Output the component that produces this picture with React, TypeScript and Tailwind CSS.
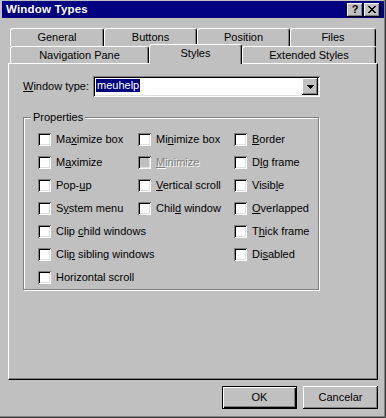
import React from "react";

function Mn({ text }: { text: string }) {
  const i = text.indexOf("&");
  if (i < 0) return <>{text}</>;
  return (
    <>
      {text.slice(0, i)}
      <span className="underline underline-offset-[1px] decoration-1">{text[i + 1]}</span>
      {text.slice(i + 2)}
    </>
  );
}

function Check({ label, disabled }: { label: string; disabled?: boolean }) {
  return (
    <div className="flex h-[13px] items-center">
      <div
        className={`w-[13px] h-[13px] shrink-0 ${
          disabled ? "bg-[#c0c0c0]" : "bg-white"
        } shadow-[inset_1px_1px_0_#808080,inset_-1px_-1px_0_#fff,inset_2px_2px_0_#000,inset_-2px_-2px_0_#dfdfdf]`}
      />
      <span
        className={`ml-[5px] whitespace-nowrap ${
          disabled ? "text-[#808080] [text-shadow:1px_1px_0_#fff]" : ""
        }`}
      >
        <Mn text={label} />
      </span>
    </div>
  );
}

function Tab({ label, w, selected }: { label: string; w: string; selected?: boolean }) {
  return (
    <div
      className={`${w} ${
        selected ? "relative z-10 -mt-[2px] h-[20px] bg-[#c0c0c0] pb-[3px]" : "h-full"
      } flex items-center justify-center border-l border-t border-r border-l-white border-t-white border-r-black rounded-t-[3px] shadow-[inset_-1px_0_0_#808080]`}
    >
      {label}
    </div>
  );
}

const col1 = [
  "Ma&ximize box",
  "M&aximize",
  "Pop-&up",
  "S&ystem menu",
  "Clip &child windows",
  "Cli&p sibling windows",
  "Horizontal scroll",
];
const col3 = ["&Border", "D&lg frame", "Visib&le", "&Overlapped", "T&hick frame", "Di&sabled"];

export default function App() {
  return (
    <div className="w-[386px] h-[418px] bg-[#c0c0c0] border-r border-b border-r-[#404040] border-b-[#404040] font-['Liberation_Sans',Arial,sans-serif] text-[11px] text-black leading-none select-none">
      <div className="h-full border-r border-b border-r-[#808080] border-b-[#808080] pl-[2px] pt-[1px]">
        {/* Title bar */}
        <div className="h-[17px] bg-[#000080] flex items-center pl-[4px] pr-[4px]">
          <span className="text-white font-bold text-[11.5px] tracking-[0.2px]">Window Types</span>
          <div className="ml-auto flex">
            <div className="w-[16px] h-[14px] bg-[#c0c0c0] flex items-center justify-center font-bold text-[11px] shadow-[inset_-1px_-1px_0_#000,inset_1px_1px_0_#fff,inset_-2px_-2px_0_#808080]">
              ?
            </div>
            <div className="ml-[1px] w-[16px] h-[14px] bg-[#c0c0c0] flex items-center justify-center shadow-[inset_-1px_-1px_0_#000,inset_1px_1px_0_#fff,inset_-2px_-2px_0_#808080]">
              <svg width="8" height="7" viewBox="0 0 8 7" shapeRendering="crispEdges">
                <path
                  d="M0 0h2v1h-2zM6 0h2v1h-2zM1 1h2v1h-2zM5 1h2v1h-2zM2 2h4v1h-4zM3 3h2v1h-2zM2 4h4v1h-4zM1 5h2v1h-2zM5 5h2v1h-2zM0 6h2v1h-2zM6 6h2v1h-2z"
                  fill="#000"
                />
              </svg>
            </div>
          </div>
        </div>

        {/* Tabs + panel */}
        <div className="ml-[6px] mt-[10px] w-[370px]">
          <div className="flex h-[18px] pl-[2px]">
            <Tab label="General" w="w-[94px]" />
            <Tab label="Buttons" w="w-[93px]" />
            <Tab label="Position" w="w-[93px]" />
            <Tab label="Files" w="w-[86px]" />
          </div>
          <div className="flex h-[17px] pl-[2px]">
            <Tab label="Navigation Pane" w="w-[139px]" />
            <Tab label="Styles" w="w-[93px]" selected />
            <Tab label="Extended Styles" w="w-[134px]" />
          </div>
          <div className="h-[317px] border border-t-white border-l-white border-r-black border-b-black shadow-[inset_-1px_-1px_0_#808080] pl-[14px] pt-[12px]">
            <div className="flex items-center">
              <span className="w-[70px]">
                <Mn text="&Window type:" />
              </span>
              <div className="w-[227px] h-[21px] bg-white shadow-[inset_1px_1px_0_#808080,inset_-1px_-1px_0_#fff,inset_2px_2px_0_#000,inset_-2px_-2px_0_#dfdfdf] p-[2px] flex">
                <div className="flex-1 pl-[1px] pt-[1px]">
                  <span className="inline-flex h-[13px] items-center bg-[#000080] text-white px-[1px]">meuhelp</span>
                </div>
                <div className="w-[16px] h-[17px] bg-[#c0c0c0] flex items-center justify-center shadow-[inset_-1px_-1px_0_#000,inset_1px_1px_0_#fff,inset_-2px_-2px_0_#808080]">
                  <svg width="7" height="4" viewBox="0 0 7 4" shapeRendering="crispEdges">
                    <path d="M0 0h7v1h-7zM1 1h5v1h-5zM2 2h3v1h-3zM3 3h1v1h-1z" fill="#000" />
                  </svg>
                </div>
              </div>
            </div>

            <div className="relative mt-[20px] w-[296px] h-[173px] border border-[#808080] shadow-[1px_1px_0_#fff,inset_1px_1px_0_#fff] pl-[14px] pt-[15px]">
              <span className="absolute -top-[6px] left-[7px] px-[2px] bg-[#c0c0c0]">Properties</span>
              <div className="flex">
                <div className="w-[100px] flex flex-col gap-[10px]">
                  {col1.map((l) => (
                    <Check key={l} label={l} />
                  ))}
                </div>
                <div className="w-[96px] flex flex-col gap-[10px]">
                  <Check label="Mi&nimize box" />
                  <Check label="&Minimize" disabled />
                  <Check label="&Vertical scroll" />
                  <Check label="Chil&d window" />
                </div>
                <div className="flex flex-col gap-[10px]">
                  {col3.map((l) => (
                    <Check key={l} label={l} />
                  ))}
                </div>
              </div>
            </div>
          </div>

          <div className="mt-[6px] flex justify-end gap-[6px]">
            <div className="w-[75px] h-[23px] border border-black shadow-[inset_1px_1px_0_#fff,inset_-1px_-1px_0_#000,inset_-2px_-2px_0_#808080] flex items-center justify-center">
              OK
            </div>
            <div className="w-[75px] h-[23px] shadow-[inset_-1px_-1px_0_#000,inset_1px_1px_0_#fff,inset_-2px_-2px_0_#808080] flex items-center justify-center">
              Cancelar
            </div>
          </div>
        </div>
      </div>
    </div>
  );
}
